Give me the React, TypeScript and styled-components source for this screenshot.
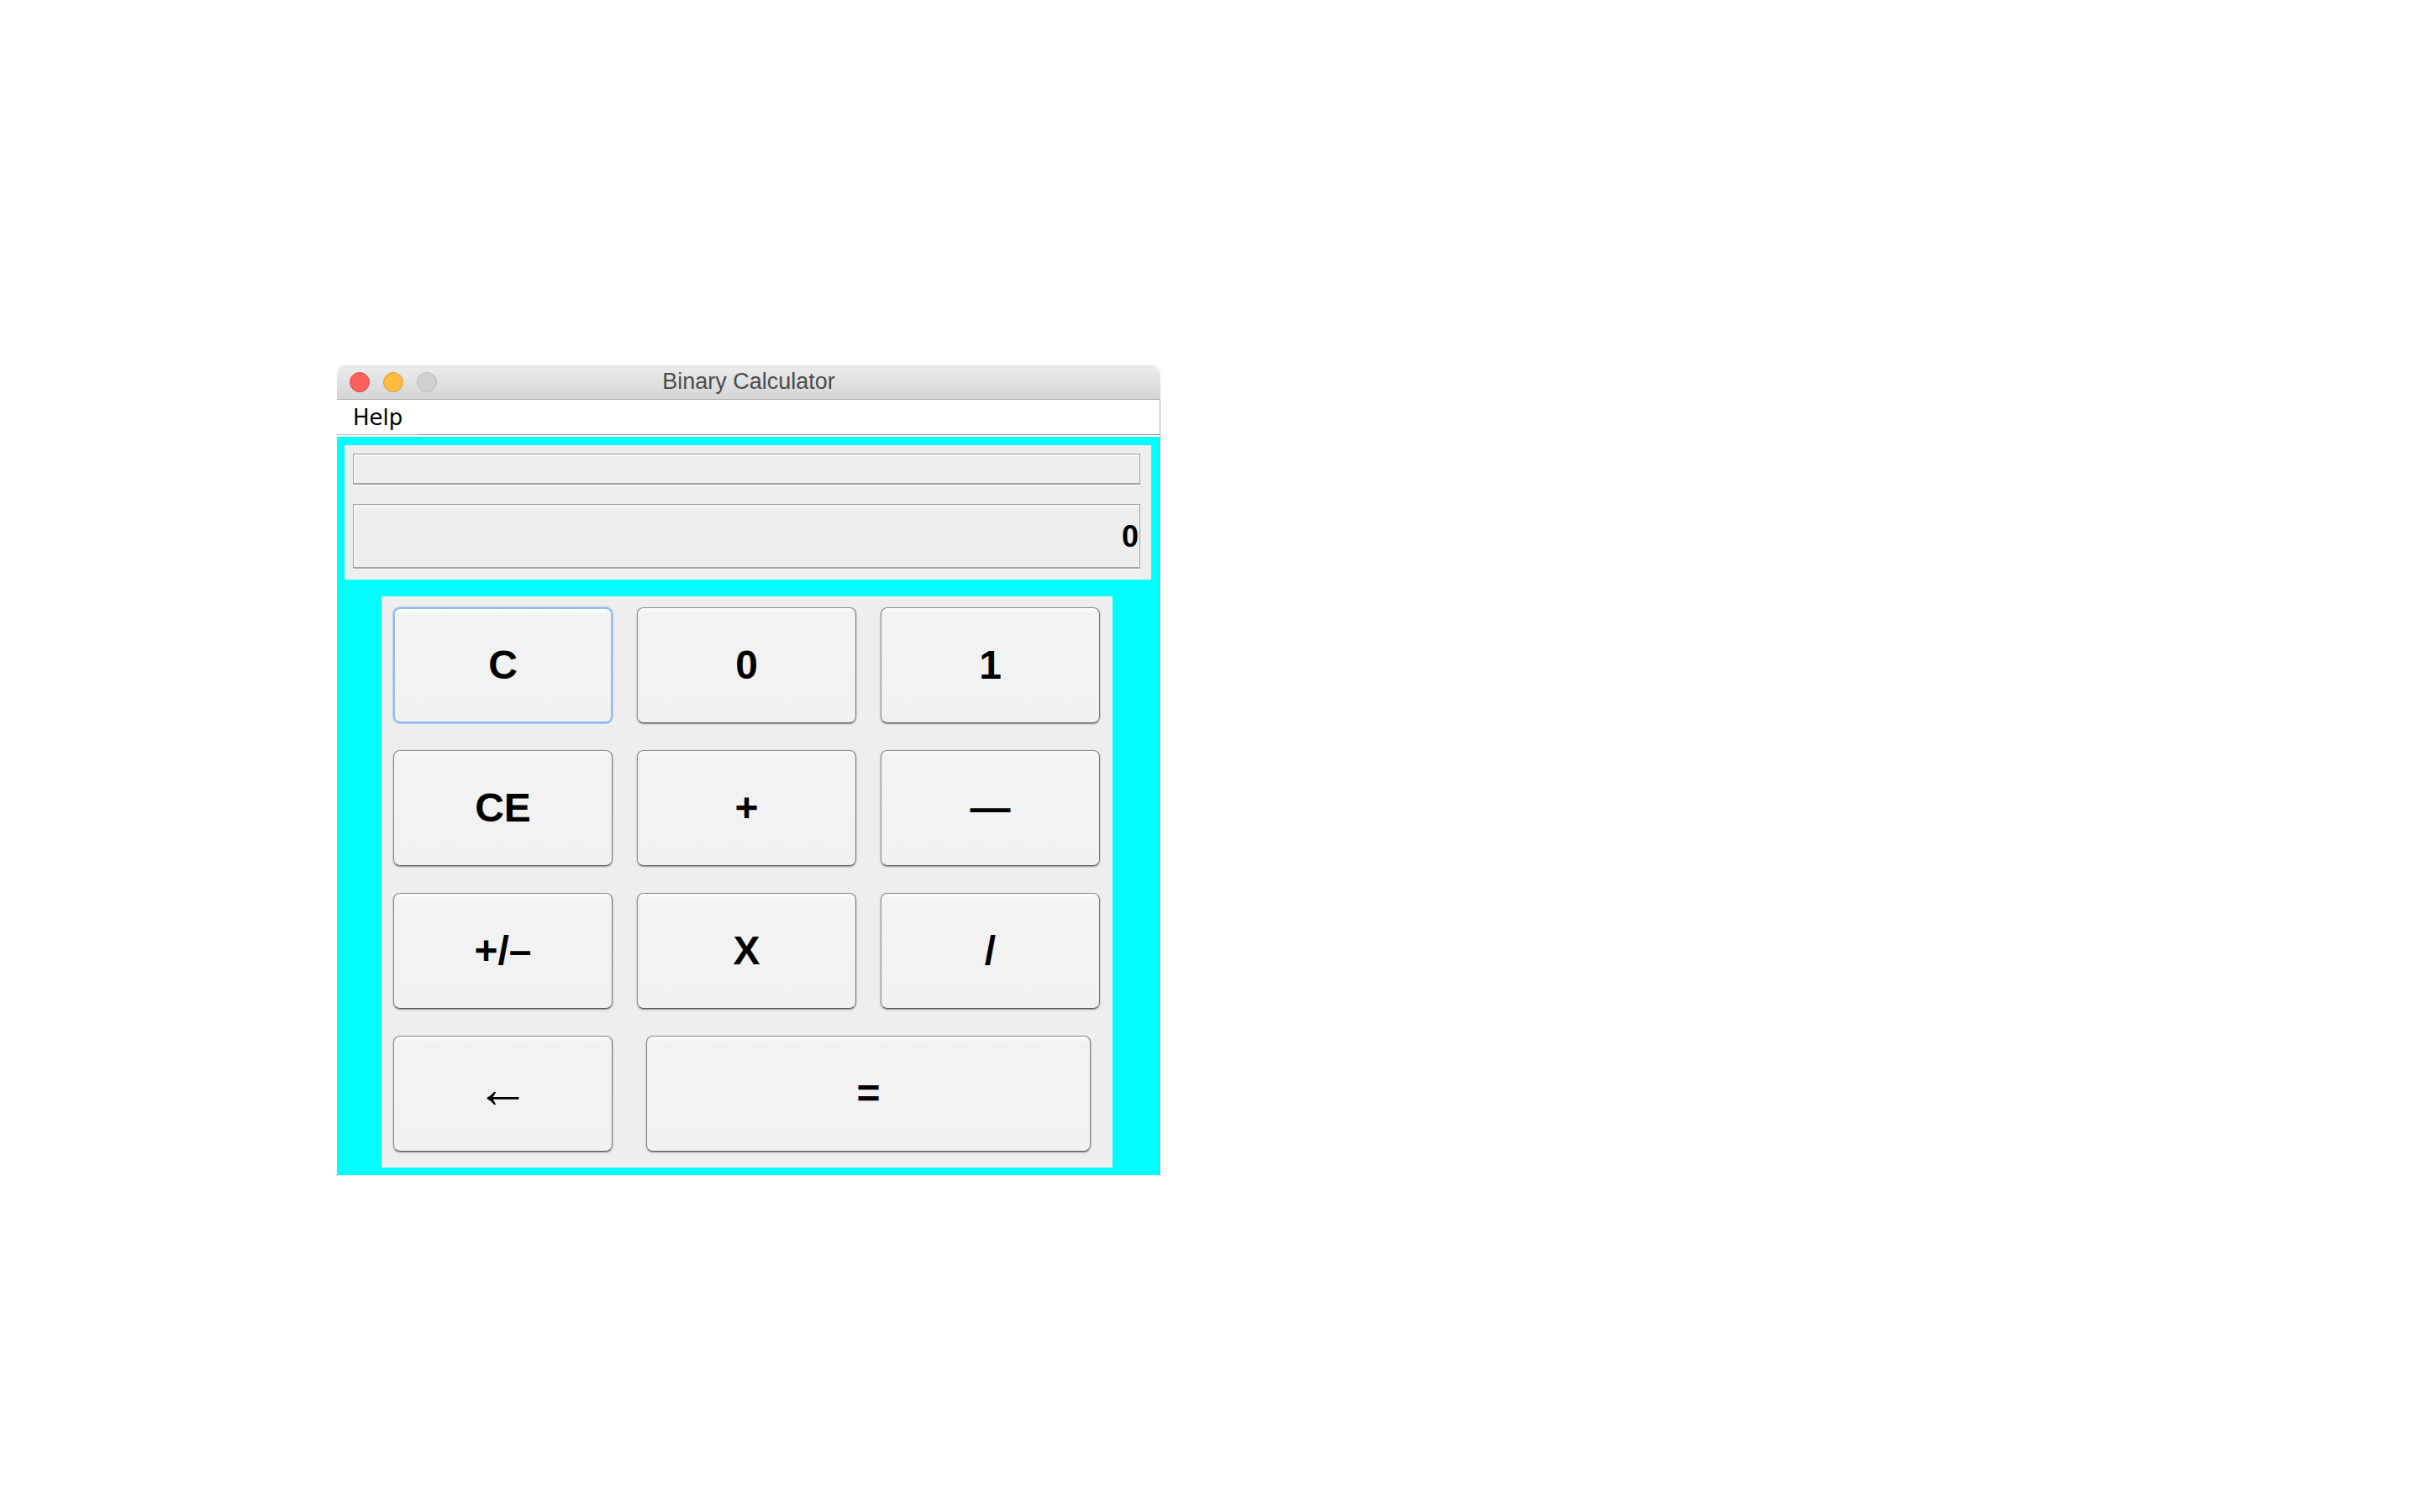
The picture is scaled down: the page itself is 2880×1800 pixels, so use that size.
import React from "react";
import styled, { createGlobalStyle } from "styled-components";

const Global = createGlobalStyle`
  html, body { margin: 0; padding: 0; background: #ffffff; }
  body { width: 2880px; height: 1800px; overflow: hidden; }
`;

const Page = styled.div`
  padding: 434px 0 0 401px;
`;

const Window = styled.div`
  width: 980px;
  display: flex;
  flex-direction: column;
`;

const TitleBar = styled.div`
  box-sizing: border-box;
  height: 42px;
  padding: 0 15px;
  display: grid;
  grid-template-columns: 1fr auto 1fr;
  align-items: center;
  background: linear-gradient(#ededed, #d5d5d5);
  border-bottom: 1px solid #b3b3b3;
  border-radius: 10px 10px 0 0;
  box-shadow: inset 0 1px 0 #f7f7f7;
`;

const Lights = styled.div`
  display: flex;
  gap: 16px;
  align-items: center;
`;

const Light = styled.span<{ $fill: string; $edge: string }>`
  box-sizing: border-box;
  width: 24px;
  height: 24px;
  border-radius: 50%;
  background: ${(p) => p.$fill};
  border: 1px solid ${(p) => p.$edge};
`;

const Title = styled.div`
  font-family: "Liberation Sans", Arial, sans-serif;
  font-size: 27px;
  color: #4b4b4b;
  white-space: nowrap;
`;

const MenuBar = styled.div`
  display: flex;
  height: 44px;
  background: #ffffff;
  border-right: 1px solid #a4a4a4;
`;

const MenuItem = styled.div`
  box-sizing: border-box;
  width: 97px;
  height: 42px;
  padding-left: 19px;
  font-family: "DejaVu Sans", sans-serif;
  font-size: 26px;
  line-height: 43px;
  color: #000;
  border-bottom: 1px solid #acacac;
`;

const MenuFill = styled.div`
  flex: 1;
  box-sizing: border-box;
  height: 42px;
  border-bottom: 1px solid #8a8a8a;
`;

const Content = styled.div`
  background: #00ffff;
  padding: 10px 10px 9px 9px;
  display: flex;
  flex-direction: column;
  border-right: 1px solid #a4a4a4;
`;

const DisplayPanel = styled.div`
  background: #eeeeee;
  padding: 10px 13px 13px 10px;
  display: flex;
  flex-direction: column;
  gap: 23px;
`;

const Field = styled.div<{ $h: number }>`
  box-sizing: border-box;
  height: ${(p) => p.$h}px;
  background: #eeeeee;
  border: 1px solid #a4a4a4;
  border-bottom-width: 2px;
  box-shadow: inset 1px 1px 0 #eeeeee, inset 2px 2px 0 #ffffff, 0 1px 0 #ffffff;
  display: flex;
  align-items: center;
  justify-content: flex-end;
  padding: 2px 1px 0 0;
  font-family: "Liberation Sans", Arial, sans-serif;
  font-weight: 700;
  font-size: 36px;
  color: #000;
`;

const Keypad = styled.div`
  margin: 20px 0 0 44px;
  width: 870px;
  box-sizing: border-box;
  background: #eeeeee;
  padding: 13px 15px 19px 14px;
  display: grid;
  grid-template-columns: repeat(3, 261px);
  grid-template-rows: repeat(4, 138px);
  column-gap: 29px;
  row-gap: 32px;
`;

const Key = styled.button<{ $focus?: boolean; $arrow?: boolean; $wide?: boolean }>`
  margin: ${(p) => (p.$wide ? "0 11px" : "0")};
  grid-column: ${(p) => (p.$wide ? "2 / 4" : "auto")};
  padding: 0 0 ${(p) => (p.$arrow ? "12px" : "2px")} 0;
  box-sizing: border-box;
  display: flex;
  align-items: center;
  justify-content: center;
  font-family: "Liberation Sans", Arial, sans-serif;
  font-weight: ${(p) => (p.$arrow ? 400 : 700)};
  font-size: ${(p) => (p.$arrow ? "64px" : "48px")};
  color: #000;
  background: linear-gradient(#fdfdfd 0px, #f3f3f3 7px, #f1f1f1 100%);
  border-radius: 8px;
  border: ${(p) => (p.$focus ? "2px solid #8bbdee" : "1px solid #8a8a8a")};
  border-bottom-color: ${(p) => (p.$focus ? "#82b6ec" : "#555555")};
  border-right-color: ${(p) => (p.$focus ? "#8bbdee" : "#777777")};
  box-shadow: ${(p) =>
    p.$focus
      ? "inset 0 1px 0 #ffffff, 0 0 1px 1px rgba(140,190,240,0.6)"
      : "inset 0 1px 0 #ffffff, 0 1px 2px rgba(0,0,0,0.4)"};
  cursor: default;
`;

export default function App() {
  return (
    <Page>
      <Global />
      <Window>
        <TitleBar>
          <Lights>
            <Light $fill="#fc605b" $edge="#de4a45" />
            <Light $fill="#fdbc40" $edge="#de9f34" />
            <Light $fill="#d0d0d0" $edge="#bcbcbc" />
          </Lights>
          <Title>Binary Calculator</Title>
          <span />
        </TitleBar>
        <MenuBar>
          <MenuItem>Help</MenuItem>
          <MenuFill />
        </MenuBar>
        <Content>
          <DisplayPanel>
            <Field $h={37} />
            <Field $h={77}>0</Field>
          </DisplayPanel>
          <Keypad>
            <Key $focus>C</Key>
            <Key>0</Key>
            <Key>1</Key>
            <Key>CE</Key>
            <Key>+</Key>
            <Key>—</Key>
            <Key>+/–</Key>
            <Key>X</Key>
            <Key>/</Key>
            <Key $arrow>←</Key>
            <Key $wide>=</Key>
          </Keypad>
        </Content>
      </Window>
    </Page>
  );
}
